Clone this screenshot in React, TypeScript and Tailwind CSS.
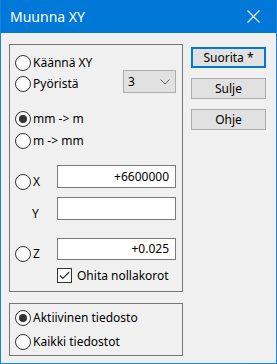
import React from "react";

const font = { fontFamily: '"Noto Sans", "Open Sans", sans-serif' };

function Radio({ checked, label }: { checked?: boolean; label: string }) {
  return (
    <div className="flex items-center h-[16px]">
      <div className="w-[16px] h-[16px] rounded-full border border-[#333333] bg-white flex items-center justify-center shrink-0">
        {checked && <div className="w-[8px] h-[8px] rounded-full bg-[#333333]" />}
      </div>
      {label && <span className="ml-[2px] text-[12px] leading-[16px] text-black whitespace-nowrap">{label}</span>}
    </div>
  );
}

function Btn({ label, def }: { label: string; def?: boolean }) {
  return (
    <div
      className={`w-[75px] h-[21px] flex items-center justify-center text-[12px] text-black bg-[#e1e1e1] ${
        def ? "border-2 border-[#0078d7]" : "border border-[#adadad]"
      }`}
    >
      {label}
    </div>
  );
}

function Input({ value, h = 23 }: { value?: string; h?: number }) {
  return (
    <div
      className="ml-[57px] w-[119px] bg-white border border-[#7a7a7a] flex items-center justify-end pr-[6px] text-[12px] text-black"
      style={{ height: h }}
    >
      {value}
    </div>
  );
}

export default function App() {
  return (
    <div className="w-[277px] h-[364px] bg-[#f0f0f0] border-x border-b border-[#1883d7] flex flex-col overflow-hidden" style={font}>
      <div className="h-[33px] bg-[#0078d7] flex items-center justify-between pl-[10px] pr-[17px] shrink-0 -mx-px">
        <span className="text-white text-[14px]">Muunna XY</span>
        <svg width="13" height="13" viewBox="0 0 13 13">
          <path d="M0.5 0.5 L12.5 12.5 M12.5 0.5 L0.5 12.5" stroke="white" strokeWidth="1.1" />
        </svg>
      </div>
      <div className="flex pl-[8px] pt-[11px]">
        <div className="flex flex-col">
          <div className="w-[174px] h-[248px] border border-[#767676] flex flex-col relative">
            <div className="mt-[10px] pl-[5px]">
              <Radio label="Käännä XY" />
            </div>
            <div className="mt-[-1px] h-[23px] flex items-start pl-[5px]">
              <div className="mt-[6px] w-[108px]">
                <Radio label="Pyöristä" />
              </div>
              <div className="w-[53px] h-[23px] bg-[#e1e1e1] border border-[#adadad] flex items-center justify-between pl-[4px] pr-[5px] text-[12px] text-black">
                <span>3</span>
                <svg width="10" height="6" viewBox="0 0 10 6">
                  <path d="M0.5 0.5 L5 5 L9.5 0.5" stroke="#606060" strokeWidth="1" fill="none" />
                </svg>
              </div>
            </div>
            <div className="mt-[18px] pl-[5px]">
              <Radio checked label="mm -> m" />
            </div>
            <div className="mt-[6px] pl-[5px]">
              <Radio label="m -> mm" />
            </div>
            <div className="mt-[16px] h-[23px] relative flex">
              <div className="absolute left-[5px] top-[9px]">
                <Radio label="X" />
              </div>
              <div className="-ml-[10px] flex">
                <Input value="+6600000" />
              </div>
            </div>
            <div className="mt-[9px] h-[23px] relative flex">
              <span className="absolute left-[22px] top-[9px] text-[12px] leading-[16px] text-black">Y</span>
              <div className="-ml-[10px] flex">
                <Input />
              </div>
            </div>
            <div className="mt-[18px] h-[22px] relative flex">
              <div className="absolute left-[5px] top-[8px]">
                <Radio label="Z" />
              </div>
              <div className="-ml-[10px] flex">
                <Input value="+0.025" h={22} />
              </div>
            </div>
            <div className="mt-[8px] pl-[47px] flex items-center h-[15px]">
              <div className="w-[15px] h-[15px] border border-[#333333] bg-white flex items-center justify-center shrink-0">
                <svg width="11" height="9" viewBox="0 0 11 9">
                  <path d="M0.8 4.5 L3.8 7.5 L10.2 1" stroke="#333333" strokeWidth="1.2" fill="none" />
                </svg>
              </div>
              <span className="ml-[5px] text-[12px] text-black whitespace-nowrap">Ohita nollakorot</span>
            </div>
          </div>
          <div className="mt-[11px] w-[174px] h-[53px] border border-[#767676] flex flex-col pl-[5px]">
            <div className="mt-[6px]">
              <Radio checked label="Aktiivinen tiedosto" />
            </div>
            <div className="mt-[8px]">
              <Radio label="Kaikki tiedostot" />
            </div>
          </div>
        </div>
        <div className="ml-[8px] mt-[3px] flex flex-col gap-[10px]">
          <Btn label="Suorita *" def />
          <Btn label="Sulje" />
          <Btn label="Ohje" />
        </div>
      </div>
    </div>
  );
}
